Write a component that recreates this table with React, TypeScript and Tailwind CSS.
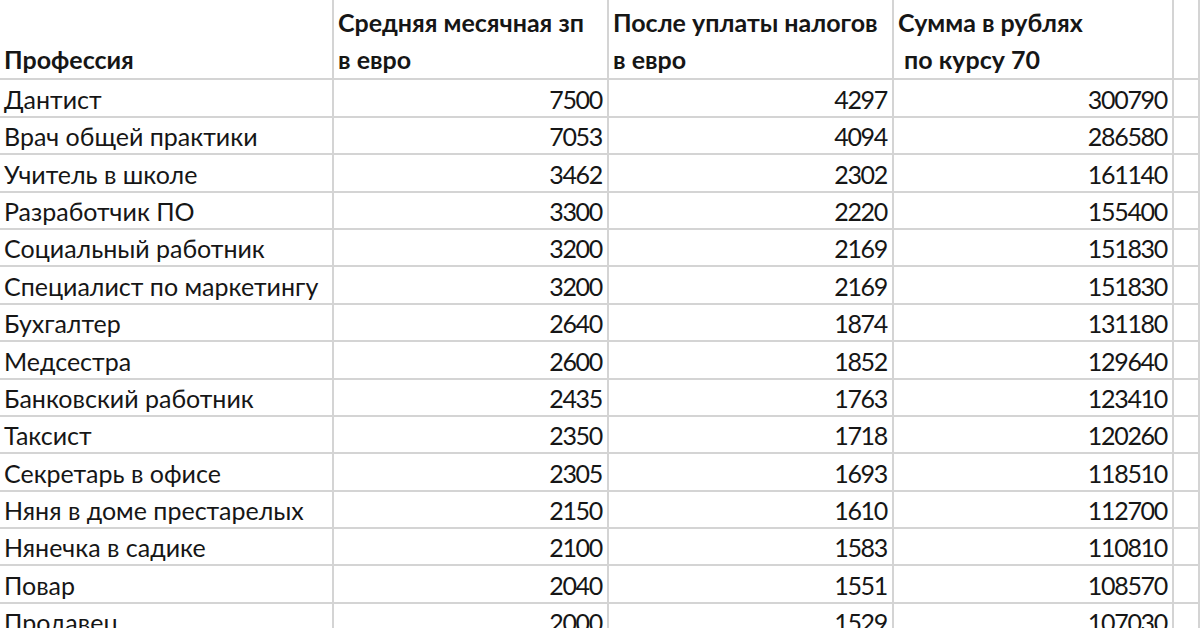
import React from 'react';

const rows: [string, number, number, number][] = [
  ['Дантист', 7500, 4297, 300790],
  ['Врач общей практики', 7053, 4094, 286580],
  ['Учитель в школе', 3462, 2302, 161140],
  ['Разработчик ПО', 3300, 2220, 155400],
  ['Социальный работник', 3200, 2169, 151830],
  ['Специалист по маркетингу', 3200, 2169, 151830],
  ['Бухгалтер', 2640, 1874, 131180],
  ['Медсестра', 2600, 1852, 129640],
  ['Банковский работник', 2435, 1763, 123410],
  ['Таксист', 2350, 1718, 120260],
  ['Секретарь в офисе', 2305, 1693, 118510],
  ['Няня в доме престарелых', 2150, 1610, 112700],
  ['Нянечка в садике', 2100, 1583, 110810],
  ['Повар', 2040, 1551, 108570],
  ['Продавец', 2000, 1529, 107030],
];

const cols = 'grid grid-cols-[334px_275px_285px_280px_1fr]';
const cell = 'border-r-2 border-b-2 border-[#d4d4d4]';
const head = `${cell} flex flex-col justify-start px-[4px] pt-[4px] whitespace-pre`;
const num = `${cell} px-[5px] pt-[4px] text-right tracking-[-1.3px]`;

export default function App() {
  return (
    <div className="w-[1200px] h-[628px] overflow-hidden bg-white text-[#161616] font-['Lato',sans-serif] text-[25px]">
      <div className={`${cols} h-[79px] font-bold leading-[37px]`}>
        <div className={head}>
          <span> </span>
          <span>Профессия</span>
        </div>
        <div className={head}>
          <span>Средняя месячная зп</span>
          <span>в евро</span>
        </div>
        <div className={head}>
          <span>После уплаты налогов</span>
          <span>в евро</span>
        </div>
        <div className={head}>
          <span>Сумма в рублях</span>
          <span> по курсу 70</span>
        </div>
        <div className={cell} />
      </div>
      {rows.map(([name, avg, net, rub]) => (
        <div key={name} className={`${cols} h-[37.36px] leading-[33px]`}>
          <div className={`${cell} px-[4px] pt-[4px] whitespace-nowrap`}>{name}</div>
          <div className={num}>{avg}</div>
          <div className={num}>{net}</div>
          <div className={num}>{rub}</div>
          <div className={cell} />
        </div>
      ))}
    </div>
  );
}
